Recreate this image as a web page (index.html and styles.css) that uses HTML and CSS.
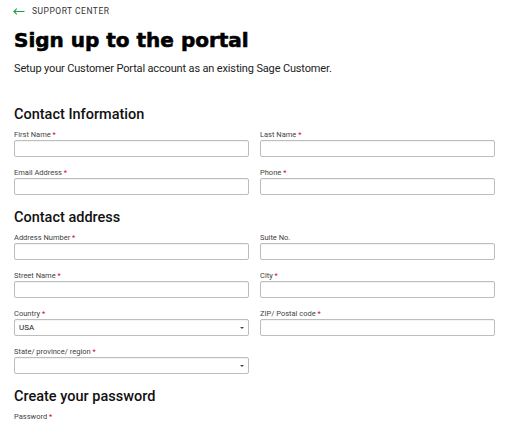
FILE: index.html
```html
<!DOCTYPE html>
<html lang="en">
<head>
<meta charset="utf-8">
<title>Sign up to the portal</title>
<link rel="stylesheet" href="styles.css">
</head>
<body>
<div class="page">
  <a class="back" href="#">
    <svg class="back-icon" width="12" height="7" viewBox="0 0 12 7" aria-hidden="true"><path d="M11.5 3.5H1M3.8 0.6L0.9 3.5L3.8 6.4" fill="none" stroke="#1f9c4a" stroke-width="1.1"/></svg>
    <span>SUPPORT CENTER</span>
  </a>
  <h1 class="title">Sign up to the portal</h1>
  <p class="lead">Setup your Customer Portal account as an existing Sage Customer.</p>

  <h2 class="section first">Contact Information</h2>
  <div class="grid">
    <div class="field"><label>First Name <span class="req">*</span></label><div class="input"></div></div>
    <div class="field"><label>Last Name <span class="req">*</span></label><div class="input"></div></div>
    <div class="field"><label>Email Address <span class="req">*</span></label><div class="input"></div></div>
    <div class="field"><label>Phone <span class="req">*</span></label><div class="input"></div></div>
  </div>

  <h2 class="section">Contact address</h2>
  <div class="grid">
    <div class="field"><label>Address Number <span class="req">*</span></label><div class="input"></div></div>
    <div class="field"><label>Suite No.</label><div class="input"></div></div>
    <div class="field"><label>Street Name <span class="req">*</span></label><div class="input"></div></div>
    <div class="field"><label>City <span class="req">*</span></label><div class="input"></div></div>
    <div class="field"><label>Country <span class="req">*</span></label><div class="input select"><span>USA</span><span class="caret"></span></div></div>
    <div class="field"><label>ZIP/ Postal code <span class="req">*</span></label><div class="input"></div></div>
    <div class="field"><label>State/ province/ region <span class="req">*</span></label><div class="input select"><span></span><span class="caret"></span></div></div>
  </div>

  <h2 class="section">Create your password</h2>
  <div class="grid">
    <div class="field"><label>Password <span class="req">*</span></label></div>
  </div>
</div>
</body>
</html>
```

FILE: styles.css
```css
html, body {
  margin: 0;
  padding: 0;
  background: #ffffff;
}
body {
  font-family: Roboto, "Liberation Sans", sans-serif;
  color: #1a1a1a;
  overflow: hidden;
}
.page {
  padding: 5px 11px 0 14px;
}
.back {
  display: flex;
  align-items: center;
  gap: 7px;
  text-decoration: none;
  color: #333;
  font-size: 8.5px;
  letter-spacing: 0.5px;
  line-height: 12px;
  height: 12px;
  margin-left: -1px;
}
.back-icon {
  display: block;
}
.title {
  font-family: "DejaVu Sans", Inter, sans-serif;
  font-weight: 700;
  font-size: 20px;
  line-height: 26px;
  -webkit-text-stroke: 0.6px #000;
  margin: 10px 0 0 0;
  color: #000;
}
.lead {
  font-size: 11px;
  letter-spacing: -0.15px;
  line-height: 14px;
  margin: 9px 0 0 0;
  color: #222;
}
.section {
  font-size: 14.5px;
  font-weight: 500;
  line-height: 18px;
  margin: 14px 0 0 0;
  color: #111;
}
.section.first { margin-top: 30px; }
.grid {
  display: grid;
  grid-template-columns: 235px 235px;
  column-gap: 11px;
  row-gap: 11px;
  margin-top: 6px;
}
.field label {
  display: block;
  font-size: 7.5px;
  line-height: 10px;
  height: 10px;
  color: #3f3f3f;
}
.req { color: #d4002a; }
.input {
  box-sizing: border-box;
  height: 17px;
  border: 1px solid #bdbdbd;
  border-radius: 2px;
  box-shadow: inset 0 1px 1px rgba(0,0,0,0.05);
}
.select {
  display: flex;
  align-items: center;
  justify-content: space-between;
  padding: 0 4px 0 4px;
  font-size: 8px;
  color: #222;
}
.caret {
  width: 0;
  height: 0;
  border-left: 2px solid transparent;
  border-right: 2px solid transparent;
  border-top: 2.5px solid #444;
}
```
